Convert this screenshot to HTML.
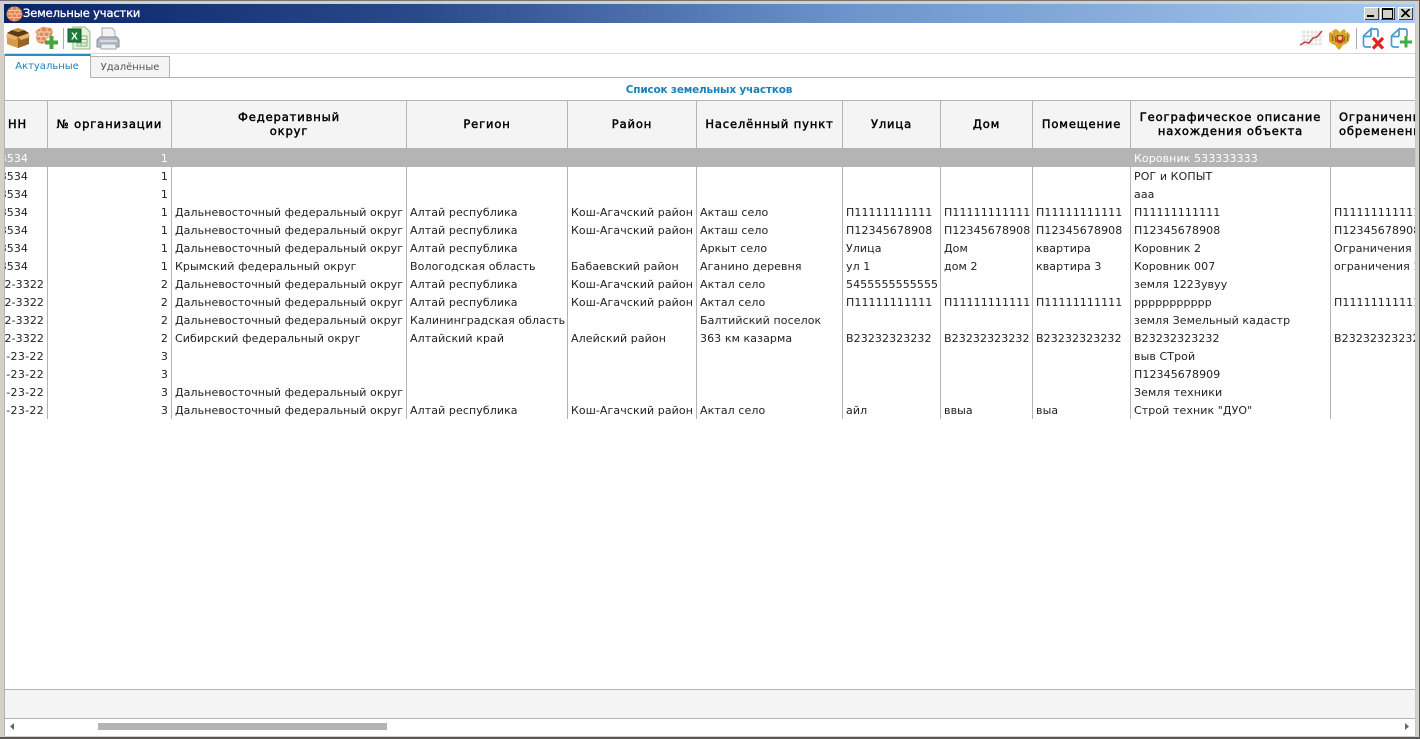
<!DOCTYPE html>
<html lang="ru"><head><meta charset="utf-8"><title>Земельные участки</title>
<style>
html,body{margin:0;padding:0;background:#fff}
body{width:1420px;height:739px;position:relative;overflow:hidden;font-family:"DejaVu Sans","Liberation Sans",sans-serif;color:#222}
.a{position:absolute}
#tb{left:4px;top:4px;width:1411px;height:19px;background:linear-gradient(90deg,#0a246a 0,#2a4a8c 30%,#6d94cc 60%,#a6caf0 100%)}
#tt{left:23px;top:5px;color:#fff;font-size:11.5px;line-height:17px;font-weight:400;letter-spacing:-.15px;-webkit-text-stroke:.3px #fff}
.wb{position:absolute;top:7px;width:15px;height:13px;background:#d4d0c8;box-shadow:inset 1px 1px 0 #fff,inset -1px -1px 0 #404040}
#wrap{left:5px;top:100px;width:1411px;height:320px;overflow:hidden}
table{position:absolute;left:-28px;top:0;border-collapse:separate;border-spacing:0;table-layout:fixed;width:1451px;font-size:11px;letter-spacing:.09px}
th{padding:0 2px 1px;background:#f4f4f4;border-top:1px solid #b4b4b4;border-right:1px solid #b4b4b4;font-size:11.5px;line-height:14px;font-weight:400;color:#000;text-align:center;overflow:hidden;white-space:nowrap;letter-spacing:.88px;-webkit-text-stroke:.45px #000;box-sizing:border-box;height:48px}
td{height:18px;padding:1px 0 0 3px;border-right:1px solid #b4b4b4;white-space:nowrap;overflow:hidden;line-height:17px;box-sizing:border-box;background:#fff}
td.r{text-align:right;padding:1px 3px 0 0}
td.r.f{padding-right:19px}
td.d{letter-spacing:.3px}
tr.s td{background:#b4b4b4;color:#fff;border-right-color:#b4b4b4;height:19px;padding-top:2px}
th:nth-child(11),td:nth-child(11){border-right:0}
</style></head><body>
<!-- window frame -->
<div class="a" style="left:0;top:0;width:1420px;height:739px;background:#d4d0c8"></div>
<div class="a" style="left:0;top:0;width:1420px;height:1px;background:#777"></div>
<div class="a" style="left:0;top:737px;width:1420px;height:2px;background:#555"></div>
<div class="a" style="left:1419px;top:0;width:1px;height:739px;background:#555"></div>
<div class="a" style="left:4px;top:23px;width:1412px;height:713px;background:#fff"></div>
<div id="tb" class="a"></div>
<svg class="a" style="left:6px;top:5px" width="17" height="17" viewBox="0 0 17 17"><ellipse cx="8.500" cy="9" rx="8" ry="7.500" fill="#e07f50"/><path d="M2 5.500h13M1 9h15M2 12.500h13M6 2v3.500M11 2v3.500M4 5.500V9M9 5.500V9M13 5.500V9M6 9v3.500M11 9v3.500M8 12.500V16" stroke="#f6c6a4" fill="none"/></svg>
<div id="tt" class="a">Земельные участки</div>
<div class="wb" style="left:1364px"><div class="a" style="left:3px;top:8px;width:7px;height:2px;background:#000"></div></div>
<div class="wb" style="left:1380px"><div class="a" style="left:2px;top:1px;width:9px;height:8px;border:1px solid #000;border-top-width:2px"></div></div>
<div class="wb" style="left:1398px"><svg class="a" style="left:3px;top:2px" width="9" height="8"><path d="M0 0l8 8M1 0l8 8M8 0l-8 8M9 0l-8 8" stroke="#000" stroke-width="1"/></svg></div>
<!-- toolbar -->
<div class="a" style="left:5px;top:53px;width:1411px;height:1px;background:#d8d8d8"></div>
<svg class="a" style="left:6px;top:27px" width="24" height="22" viewBox="0 0 24 22"><path d="M1 6l11 3 11-3v11l-11 4-11-4z" fill="#c08334"/><path d="M1 6l11 4v11l-11-4z" fill="#d9994a"/><path d="M23 6l-11 4v11l11-4z" fill="#9a6224"/><path d="M1 6l5-3 6 2 6-2 5 3-11 4z" fill="#5e3a14"/><path d="M1 6l-1 4 9 3 3-3zM23 6l1 4-9 3-3-3z" fill="#e6b46c"/><path d="M6 3l6-2 6 2-6 2z" fill="#c98d3e"/></svg>
<svg class="a" style="left:34px;top:26px" width="24" height="24" viewBox="0 0 24 24"><path d="M3 4l5-3 9 1 2 4-2 5-4 1v4l-5 2-5-2-1-5 1-3-2-2z" fill="#e28a5c"/><path d="M2 6h16M1 10.500h15M3 15h10M7 1.500V6M13 2v4M5 6v4.500M10 6v4.500M15 6v4.500M7 10.500V15M12 10.500V15" stroke="#f8d0b4" stroke-width="1" fill="none"/><path d="M15.500 10h4v4.500H24v4h-4.500V23h-4v-4.500H11v-4h4.500z" fill="#45a83f"/></svg>
<div class="a" style="left:63px;top:28px;width:1px;height:21px;background:#aaa"></div>
<svg class="a" style="left:67px;top:26px" width="24" height="24" viewBox="0 0 24 24"><path d="M6 1h12l5 5v17H6z" fill="#e6f2dc" stroke="#8fb98a"/><path d="M10 10h10v10H10zM10 13.500h10M10 17h10M14 10v10" stroke="#86b57f" fill="none"/><rect x="1" y="3" width="13" height="13" fill="#1f7a3e" stroke="#0f5a28"/><text x="7.500" y="13.500" font-size="10" font-weight="700" text-anchor="middle" fill="#fff" font-family="Liberation Sans">X</text></svg>
<svg class="a" style="left:96px;top:27px" width="24" height="23" viewBox="0 0 24 23"><path d="M6 1h10l3 3v8H6z" fill="#f2f3f6" stroke="#a0a4ac"/><path d="M4 10h17l2 3v7H1v-7z" fill="#b4b8c2" stroke="#8a8e98"/><path d="M5 17h15v5H5z" fill="#eef0f4" stroke="#9aa"/><rect x="4" y="13" width="17" height="2" fill="#d7dae0"/></svg>
<svg class="a" style="left:1299px;top:29px" width="25" height="18" viewBox="0 0 25 18"><path d="M2 3h21M2 7h21M2 11h21M2 15h21M5 1v16M9 1v16M13 1v16M17 1v16M21 1v16" stroke="#dcdcdc" fill="none"/><path d="M1 16l5-3 4 1 4-5 4-1 5-6" stroke="#c0403a" stroke-width="1.500" fill="none"/></svg>
<svg class="a" style="left:1329px;top:27px" width="22" height="23" viewBox="0 0 22 23"><path d="M7 2l3 2 1 2 1-2 3-2 2 2-1 2 3-1 2 3-1 6-3 3-3 1-2 3-2 2-2-2-2-3-3-1-3-3-1-6 2-3 3 1-1-2z" fill="#d9a62c"/><path d="M3 8l1 6M19 8l-1 6M6 9l1 6M16 9l-1 6" stroke="#8a6510" fill="none"/><path d="M7.500 8h7v6.500L11 17l-3.500-2.500z" fill="#c0392b"/><circle cx="11" cy="11" r="2" fill="#f0d272"/></svg>
<div class="a" style="left:1356px;top:28px;width:1px;height:21px;background:#aaa"></div>
<svg class="a" style="left:1361px;top:27px" width="24" height="23" viewBox="0 0 24 23"><path d="M10 2h5q2 0 2 2v6M10 20H5q-2.500 0-2.500-2.500V9L10 2v6q0 1.500-1.500 1.500h-5" fill="none" stroke="#4a9ad0" stroke-width="1.700"/><path d="M12 11l10 10.500M22 11L12 21.500" stroke="#e0231c" stroke-width="3.200"/></svg>
<svg class="a" style="left:1390px;top:27px" width="24" height="23" viewBox="0 0 24 23"><path d="M9 2h6q2 0 2 2v5M9 20H4q-2.500 0-2.500-2.500V9L9 2v6q0 1.500-1.500 1.500h-5" fill="none" stroke="#4a9ad0" stroke-width="1.700"/><path d="M16 9v11.500M10 15h12" stroke="#3fae49" stroke-width="3"/></svg>
<!-- tabs -->
<div class="a" style="left:5px;top:77px;width:1411px;height:1px;background:#b4b4b4"></div>
<div class="a" style="left:4px;top:54px;width:87px;height:24px;background:#fff;border-top:2px solid #2a8cc4;border-right:1px solid #b4b4b4;box-sizing:border-box;text-align:center;font-size:10px;line-height:22px;color:#1a82b8">Актуальные</div>
<div class="a" style="left:91px;top:56px;width:79px;height:22px;background:#f4f4f4;border:1px solid #b4b4b4;border-left:0;box-sizing:border-box;text-align:center;font-size:10px;line-height:22px;color:#555">Удалённые</div>
<!-- caption -->
<div class="a" style="left:5px;top:80px;width:1408px;text-align:center;font-size:10.500px;line-height:21px;color:#1a82b8;font-weight:700;letter-spacing:-.2px">Список земельных участков</div>
<div class="a" style="left:5px;top:100px;width:1411px;height:1px;background:#b4b4b4"></div>
<!-- grid -->
<div id="wrap" class="a">
<table>
<colgroup><col style="width:71px"><col style="width:124px"><col style="width:235px"><col style="width:161px"><col style="width:129px"><col style="width:146px"><col style="width:98px"><col style="width:92px"><col style="width:98px"><col style="width:200px"><col style="width:97px"></colgroup>
<tr><th style="text-align:right;padding-right:20px">НН</th><th>№ организации</th><th>Федеративный<br>округ</th><th>Регион</th><th>Район</th><th>Населённый пункт</th><th>Улица</th><th>Дом</th><th>Помещение</th><th>Географическое описание<br>нахождения объекта</th><th style="text-align:left;padding-left:8px">Ограничения<br>обременения</th></tr>
<tr class="s"><td class="r f">8534</td><td class="r">1</td><td></td><td></td><td></td><td></td><td></td><td></td><td></td><td>Коровник 533333333</td><td></td></tr>
<tr><td class="r f">8534</td><td class="r">1</td><td></td><td></td><td></td><td></td><td></td><td></td><td></td><td>РОГ и КОПЫТ</td><td></td></tr>
<tr><td class="r f">8534</td><td class="r">1</td><td></td><td></td><td></td><td></td><td></td><td></td><td></td><td>ааа</td><td></td></tr>
<tr><td class="r f">8534</td><td class="r">1</td><td>Дальневосточный федеральный округ</td><td>Алтай республика</td><td>Кош-Агачский район</td><td>Акташ село</td><td>П11111111111</td><td>П11111111111</td><td>П11111111111</td><td>П11111111111</td><td>П11111111111</td></tr>
<tr><td class="r f">8534</td><td class="r">1</td><td>Дальневосточный федеральный округ</td><td>Алтай республика</td><td>Кош-Агачский район</td><td>Акташ село</td><td>П12345678908</td><td>П12345678908</td><td>П12345678908</td><td>П12345678908</td><td>П12345678908</td></tr>
<tr><td class="r f">8534</td><td class="r">1</td><td>Дальневосточный федеральный округ</td><td>Алтай республика</td><td></td><td>Аркыт село</td><td>Улица</td><td>Дом</td><td>квартира</td><td>Коровник 2</td><td>Ограничения</td></tr>
<tr><td class="r f">8534</td><td class="r">1</td><td>Крымский федеральный округ</td><td>Вологодская область</td><td>Бабаевский район</td><td>Аганино деревня</td><td>ул 1</td><td>дом 2</td><td>квартира 3</td><td>Коровник 007</td><td>ограничения 1</td></tr>
<tr><td class="r">12-3322</td><td class="r">2</td><td>Дальневосточный федеральный округ</td><td>Алтай республика</td><td>Кош-Агачский район</td><td>Актал село</td><td>5455555555555</td><td></td><td></td><td>земля 1223увуу</td><td></td></tr>
<tr><td class="r">12-3322</td><td class="r">2</td><td>Дальневосточный федеральный округ</td><td>Алтай республика</td><td>Кош-Агачский район</td><td>Актал село</td><td>П11111111111</td><td>П11111111111</td><td>П11111111111</td><td>ррррррррррр</td><td>П11111111111</td></tr>
<tr><td class="r">12-3322</td><td class="r">2</td><td>Дальневосточный федеральный округ</td><td>Калининградская область</td><td></td><td>Балтийский поселок</td><td></td><td></td><td></td><td>земля Земельный кадастр</td><td></td></tr>
<tr><td class="r">12-3322</td><td class="r">2</td><td>Сибирский федеральный округ</td><td>Алтайский край</td><td>Алейский район</td><td>363 км казарма</td><td>В23232323232</td><td>В23232323232</td><td>В23232323232</td><td>В23232323232</td><td>В23232323232</td></tr>
<tr><td class="r d">-23-22</td><td class="r">3</td><td></td><td></td><td></td><td></td><td></td><td></td><td></td><td>выв СТрой</td><td></td></tr>
<tr><td class="r d">-23-22</td><td class="r">3</td><td></td><td></td><td></td><td></td><td></td><td></td><td></td><td>П12345678909</td><td></td></tr>
<tr><td class="r d">-23-22</td><td class="r">3</td><td>Дальневосточный федеральный округ</td><td></td><td></td><td></td><td></td><td></td><td></td><td>Земля техники</td><td></td></tr>
<tr><td class="r d">-23-22</td><td class="r">3</td><td>Дальневосточный федеральный округ</td><td>Алтай республика</td><td>Кош-Агачский район</td><td>Актал село</td><td>айл</td><td>ввыа</td><td>выа</td><td>Строй техник "ДУО"</td><td></td></tr>
</table>
</div>
<!-- bottom -->
<div class="a" style="left:5px;top:689px;width:1411px;height:30px;background:#f4f4f4;border-top:1px solid #b4b4b4;border-bottom:1px solid #b4b4b4;box-sizing:border-box"></div>
<div class="a" style="left:98px;top:723px;width:289px;height:7px;background:#b4b4b4"></div>
<svg class="a" style="left:10px;top:723px" width="5" height="7"><path d="M4 0v7L0 3.500z" fill="#666"/></svg>
<svg class="a" style="left:1405px;top:723px" width="5" height="7"><path d="M0 0v7l4-3.500z" fill="#666"/></svg>
<div class="a" style="left:4px;top:54px;width:1px;height:682px;background:#b4b4b4"></div>
<div class="a" style="left:1415px;top:23px;width:1px;height:713px;background:#c8c8c8"></div>
</body></html>
